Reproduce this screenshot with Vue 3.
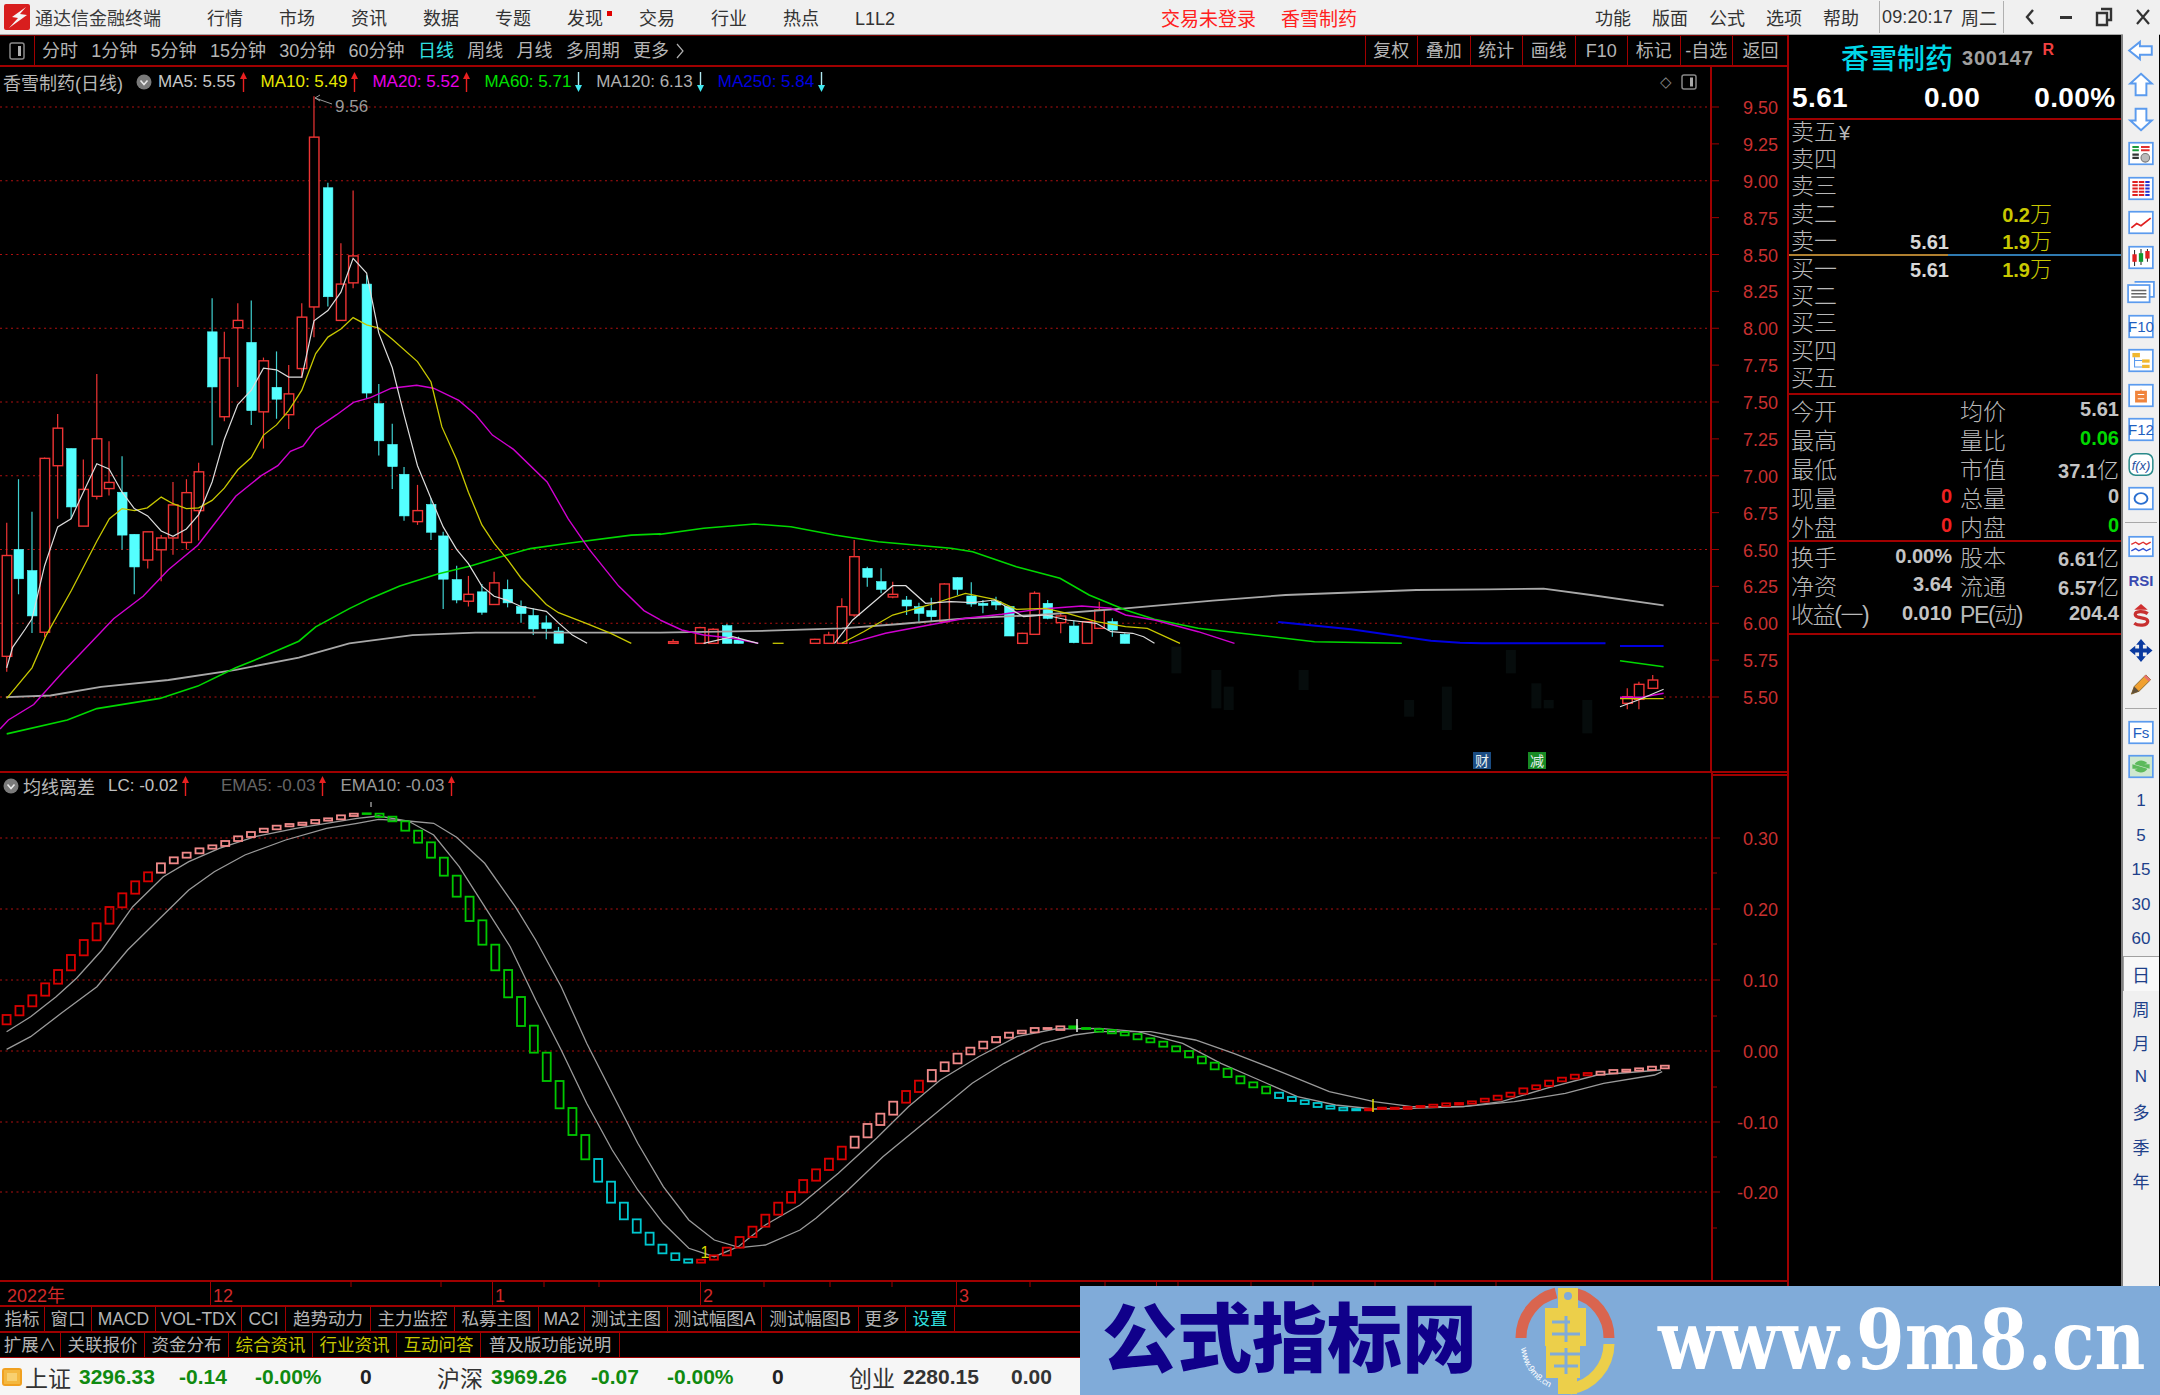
<template>
  <div class="terminal">
    <!-- 标题栏 -->
    <div class="titlebar">
      <svg class="app-logo" viewBox="0 0 26 26">
        <rect width="26" height="26" rx="2" fill="#d81e1e" />
        <path d="M22 3 L8 13 L14 14 L5 24 L23 11 L16 10 L22 3Z" fill="#f4f4f4" />
      </svg>
      <span class="app-name">通达信金融终端</span>
      <div class="menu">
        <span v-for="m in menuLeft" :key="m" class="menu-item" :class="{ dotted: m === '发现' }">{{ m }}</span>
      </div>
      <span class="notice notice-a">交易未登录</span>
      <span class="notice notice-b">香雪制药</span>
      <div class="menu menu-right">
        <span v-for="m in menuRight" :key="m">{{ m }}</span>
      </div>
      <div class="clock"><span>09:20:17</span><span>周二</span></div>
      <div class="win-btns">
        <svg viewBox="0 0 14 20" width="14" height="20"><path d="M10 3 L4 10 L10 17" fill="none" stroke="#333" stroke-width="2.4" /></svg>
        <svg viewBox="0 0 14 20" width="14" height="20"><rect x="1" y="9" width="12" height="3" fill="#333" /></svg>
        <svg viewBox="0 0 18 20" width="18" height="20"><path d="M6 2 H16 V13 H13 M2 6 H12 V18 H2Z" fill="none" stroke="#333" stroke-width="2.4" /></svg>
        <svg viewBox="0 0 16 20" width="16" height="20"><path d="M2 3 L14 17 M14 3 L2 17" stroke="#333" stroke-width="2.2" /></svg>
      </div>
    </div>

    <div class="main">
      <div class="left">
        <!-- 周期工具栏 -->
        <div class="toolbar">
          <div class="layout-btn">
            <svg viewBox="0 0 16 18" width="16" height="18"><rect x="1" y="1" width="14" height="16" rx="2" fill="none" stroke="#8a8a8a" stroke-width="1.5" /><rect x="9" y="4" width="3" height="10" fill="#b0b0b0" /></svg>
          </div>
          <div class="periods">
            <span v-for="p in periods" :key="p" :class="{ on: p === '日线' }">{{ p }}</span>
            <svg viewBox="0 0 10 18" width="10" height="18"><path d="M2 2 L8 9 L2 16" fill="none" stroke="#b0b0b0" stroke-width="1.2" /></svg>
          </div>
          <div class="tool-btns">
            <span v-for="t in toolBtns" :key="t">{{ t }}</span>
          </div>
        </div>

        <!-- K线主图 -->
        <div class="pane price-pane">
          <svg class="chart" viewBox="0 67 1788 705" width="1788" height="705">
            <template v-for="y in priceGrid" :key="y">
              <line v-if="y !== 697" class="grid" x1="0" :y1="y" x2="1710" :y2="y" />
            </template>
            <line class="grid" x1="0" y1="697" x2="536" y2="697" />
            <line class="grid" x1="1664" y1="697" x2="1710" y2="697" />

            <rect v-for="g in ghosts" :key="g[0]" :x="g[0] - 5" :y="g[1]" width="10" :height="g[2] - g[1]" fill="#060c0c" />

            <g v-for="(c, i) in candles" :key="i">
              <line :x1="c.x" :y1="c.wickTop" :x2="c.x" :y2="c.wickBottom" :stroke="c.up ? '#ee3434' : '#3fd0d0'" stroke-width="1.2" />
              <rect :x="c.x - 4.5" :y="c.top" width="9.5" :height="c.bottom - c.top" :class="c.up ? 'candle-up' : 'candle-down'" />
            </g>

            <template v-for="s in maSegments" :key="s.key">
              <polyline :points="s.points" fill="none" :stroke="s.color" :stroke-width="s.width" />
            </template>

            <path d="M315 98 L332 104 M315 98 L320 95 M315 98 L320 101" stroke="#999" fill="none" />
            <text x="335" y="112" class="peak">9.56</text>

            <rect x="1473" y="752" width="18" height="17" fill="#1a4c82" />
            <text x="1482" y="766" class="flag">财</text>
            <rect x="1528" y="752" width="18" height="17" fill="#178a24" />
            <text x="1537" y="766" class="flag">减</text>

            <line class="axis" x1="1711" y1="67" x2="1711" y2="772" />
            <line class="axis" x1="0" y1="772" x2="1788" y2="772" />
            <template v-for="l in priceLabels" :key="l.text">
              <line class="axis-thin" x1="1711" :y1="l.y" x2="1719" :y2="l.y" />
              <text x="1778" :y="l.y + 7" class="axis-text">{{ l.text }}</text>
            </template>
          </svg>

          <div class="legend">
            <span class="legend-name">香雪制药(日线)</span>
            <svg class="legend-dot" viewBox="0 0 16 16" width="16" height="16">
              <circle cx="8" cy="8" r="7.5" fill="#7a7a7a" />
              <path d="M4.5 6.5 L8 10.5 L11.5 6.5" fill="none" stroke="#e8e8e8" stroke-width="1.6" />
            </svg>
            <template v-for="m in maLegend" :key="m.label">
              <span class="legend-item" :style="{ color: m.color }">{{ m.label }}</span>
              <svg class="legend-arrow" :class="m.up ? 'arrow-up' : 'arrow-down'" viewBox="0 0 9 20" width="9" height="20">
                <template v-if="m.up"><path d="M4.5 6 V20" /><path d="M4.5 0 L8 7 H1Z" class="head" /></template>
                <template v-else><path d="M4.5 0 V14" /><path d="M4.5 20 L8 13 H1Z" class="head" /></template>
              </svg>
            </template>
          </div>
          <div class="pane-icons">
            <span>◇</span>
            <svg viewBox="0 0 16 16" width="16" height="16"><rect x="1" y="1" width="14" height="14" rx="2" fill="none" stroke="#888" stroke-width="1.5" /><rect x="9" y="3.5" width="3" height="9" fill="#aaa" /></svg>
          </div>
        </div>

        <!-- 副图：均线离差 -->
        <div class="pane indicator-pane">
          <svg class="chart" viewBox="0 772 1788 510" width="1788" height="510">
            <line v-for="y in indGrid" :key="y" class="grid" x1="0" :y1="y" x2="1710" :y2="y" />

            <polyline :points="ema5" fill="none" stroke="#9a9a9a" stroke-width="1.3" />
            <polyline :points="ema10" fill="none" stroke="#9a9a9a" stroke-width="1.3" />

            <rect
              v-for="(b, i) in lcBars"
              :key="i"
              :x="b.x - 4"
              :y="b.top"
              width="8"
              :height="b.height"
              fill="none"
              :stroke="b.color"
              stroke-width="1.8"
            />

            <line x1="371" y1="802" x2="371" y2="807" stroke="#ddd" />
            <text x="705" y="1258" class="sig" fill="#d8d800">1</text>
            <line x1="1077" y1="1019" x2="1077" y2="1032" stroke="#eee" stroke-width="1.5" />
            <line x1="1373" y1="1099" x2="1373" y2="1112" stroke="#e0e000" stroke-width="1.5" />

            <line class="axis" x1="0" y1="772" x2="1788" y2="772" />
            <line class="axis" x1="1712" y1="772" x2="1712" y2="1281" />
            <line class="axis" x1="1712" y1="775" x2="1788" y2="775" />
            <line class="axis" x1="0" y1="1281" x2="1788" y2="1281" />
            <template v-for="l in indLabels" :key="l.text">
              <line class="axis-thin" x1="1712" :y1="l.y" x2="1720" :y2="l.y" />
              <text x="1778" :y="l.y + 7" class="axis-text">{{ l.text }}</text>
            </template>
            <line v-for="y in indMinorTicks" :key="y" class="axis-thin" x1="1712" :y1="y" x2="1717" :y2="y" />
          </svg>

          <div class="legend legend-ind">
            <svg class="legend-dot" viewBox="0 0 16 16" width="16" height="16">
              <circle cx="8" cy="8" r="7.5" fill="#7a7a7a" />
              <path d="M4.5 6.5 L8 10.5 L11.5 6.5" fill="none" stroke="#e8e8e8" stroke-width="1.6" />
            </svg>
            <span class="legend-name">均线离差</span>
            <template v-for="m in indLegend" :key="m.label">
              <span class="legend-item" :class="m.cls">{{ m.label }}</span>
              <svg class="legend-arrow arrow-up" viewBox="0 0 9 20" width="9" height="20"><path d="M4.5 6 V20" /><path d="M4.5 0 L8 7 H1Z" class="head" /></svg>
            </template>
          </div>
        </div>

        <!-- 时间轴 -->
        <div class="date-axis">
          <span v-for="d in dates" :key="d.text" class="date-mark" :style="{ width: d.width + 'px' }">{{ d.text }}</span>
          <svg class="date-ticks" viewBox="0 1282 1788 6" width="1788" height="6">
            <line v-for="x in dateTicks" :key="x" :x1="x" y1="1282" :x2="x" y2="1287" stroke="#a00000" />
          </svg>
        </div>

        <!-- 底部标签 -->
        <div class="tabs tabs-a">
          <span v-for="t in tabsA" :key="t.text" :style="{ width: t.width + 'px' }" :class="t.cls">{{ t.text }}</span>
        </div>
        <div class="tabs tabs-b">
          <span v-for="t in tabsB" :key="t.text" :style="{ width: t.width + 'px' }" :class="t.cls">{{ t.text }}</span>
        </div>
      </div>

      <!-- 右侧盘口 -->
      <div class="quote">
        <div class="q-title">
          <span class="q-name">香雪制药</span>
          <span class="q-code">300147</span>
          <span class="q-flag">R</span>
        </div>
        <div class="q-price"><span>5.61</span><span>0.00</span><span>0.00%</span></div>

        <div class="book book-sell">
          <div v-for="r in sellRows" :key="r.name" class="book-row">
            <span class="book-name">{{ r.name }}<i v-if="r.name === '卖五'" class="yen">¥</i></span>
            <span class="book-price">{{ r.price }}</span>
            <span class="book-vol">{{ r.vol }}<i v-if="r.vol">万</i></span>
          </div>
        </div>
        <div class="book-split"><i></i><i></i></div>
        <div class="book book-buy">
          <div v-for="r in buyRows" :key="r.name" class="book-row">
            <span class="book-name">{{ r.name }}</span>
            <span class="book-price">{{ r.price }}</span>
            <span class="book-vol">{{ r.vol }}<i v-if="r.vol">万</i></span>
          </div>
        </div>

        <div class="stats">
          <div v-for="r in statsA" :key="r[0]" class="stat-row">
            <div class="stat-cell"><span>{{ r[0] }}</span><b :class="r[2]">{{ r[1] }}</b></div>
            <div class="stat-cell"><span>{{ r[3] }}</span><b :class="r[5]">{{ r[4] }}<i v-if="r[3] === '市值'">亿</i></b></div>
          </div>
        </div>
        <div class="stats stats-b">
          <div v-for="r in statsB" :key="r[0]" class="stat-row">
            <div class="stat-cell"><span :class="{ tight: r[0].length > 2 }">{{ r[0] }}</span><b>{{ r[1] }}</b></div>
            <div class="stat-cell"><span :class="{ tight: r[2].length > 2 }">{{ r[2] }}</span><b>{{ r[3] }}<i v-if="r[2] !== 'PE(动)'">亿</i></b></div>
          </div>
        </div>
      </div>

      <!-- 右侧竖排工具 -->
      <div class="side">
        <div class="side-item">
          <svg viewBox="0 0 26 22"><path class="arrow-ico" d="M2 11 L12 3 V7 H23 V15 H12 V19Z" /></svg>
        </div>
        <div class="side-item">
          <svg viewBox="0 0 26 22"><path class="arrow-ico" d="M13 1 L23 10 H18 V21 H8 V10 H3Z" /></svg>
        </div>
        <div class="side-item">
          <svg viewBox="0 0 26 22"><path class="arrow-ico" d="M13 21 L23 12 H18 V1 H8 V12 H3Z" /></svg>
        </div>
        <div class="side-item">
          <svg viewBox="0 0 26 22">
            <rect class="frame" x="2" y="1" width="22" height="20" />
            <path d="M5 5 H11 M5 8 H11" stroke="#1a9a3a" stroke-width="2" />
            <path d="M13 5 H21 M13 8 H21" stroke="#e03030" stroke-width="2" />
            <path d="M5 12 H11 M5 15 H11" stroke="#333" stroke-width="2" />
            <circle cx="17" cy="15" r="4" fill="#bbb" stroke="#777" />
          </svg>
        </div>
        <div class="side-item">
          <svg viewBox="0 0 26 22">
            <rect class="frame" x="2" y="1" width="22" height="20" />
            <path d="M5 5 H10 M5 8 H10 M5 11 H10 M5 14 H10 M5 17 H10" stroke="#e02020" stroke-width="2" />
            <path d="M11 5 H16 M11 8 H16 M11 11 H16 M11 14 H16 M11 17 H16" stroke="#e02020" stroke-width="2" />
            <path d="M17 5 H21 M17 8 H21 M17 11 H21 M17 14 H21 M17 17 H21" stroke="#2030d0" stroke-width="2" />
          </svg>
        </div>
        <div class="side-item">
          <svg viewBox="0 0 26 22">
            <rect class="frame" x="2" y="1" width="22" height="20" />
            <path d="M4 16 L9 12 L13 14 L22 7" fill="none" stroke="#e02020" stroke-width="1.6" />
          </svg>
        </div>
        <div class="side-item">
          <svg viewBox="0 0 26 22">
            <rect class="frame" x="2" y="1" width="22" height="20" />
            <path d="M7 4 V19 M13 3 V18 M19 3 V15" stroke="#333" />
            <rect x="5" y="8" width="4" height="7" fill="#e02020" />
            <rect x="11" y="7" width="4" height="8" fill="#109a30" />
            <rect x="17" y="5" width="4" height="7" fill="#e02020" />
          </svg>
        </div>
        <div class="side-item">
          <svg viewBox="0 0 26 22">
            <path class="frame" d="M7 2 H25 V16 H21" />
            <rect class="frame" x="1" y="5" width="20" height="16" />
            <path d="M4 10 H18 M4 13 H18 M4 16 H18" stroke="#666" stroke-width="1.4" />
          </svg>
        </div>
        <div class="side-item">
          <svg viewBox="0 0 26 22">
            <rect class="frame" x="2" y="1" width="22" height="20" />
            <text x="13" y="16.5" class="ico-text">F10</text>
          </svg>
        </div>
        <div class="side-item">
          <svg viewBox="0 0 26 22">
            <rect class="frame" x="2" y="1" width="22" height="20" />
            <rect x="5" y="4" width="7" height="4" fill="#f0b830" />
            <rect x="14" y="10" width="7" height="3" fill="#f0b830" />
            <rect x="14" y="15" width="7" height="3" fill="#f0b830" />
            <path d="M7 8 V17 H14 M7 11 H14" fill="none" stroke="#5b9bee" />
          </svg>
        </div>
        <div class="side-item">
          <svg viewBox="0 0 26 22">
            <rect class="frame" x="2" y="1" width="22" height="20" />
            <path d="M13 3 L14 6 H19 V18 H7 V6 H12Z M10 10 H16 M10 14 H16" fill="#f0843c" stroke="#fff" stroke-width="1" />
          </svg>
        </div>
        <div class="side-item">
          <svg viewBox="0 0 26 22">
            <rect class="frame" x="2" y="1" width="22" height="20" />
            <text x="13" y="16.5" class="ico-text">F12</text>
          </svg>
        </div>
        <div class="side-item">
          <svg viewBox="0 0 26 22">
            <rect x="2" y="1" width="22" height="20" rx="6" fill="#fff" stroke="#2a8a8a" stroke-width="1.4" />
            <text x="13" y="16" class="ico-fx">f(x)</text>
          </svg>
        </div>
        <div class="side-item">
          <svg viewBox="0 0 26 22">
            <rect class="frame" x="2" y="1" width="22" height="20" />
            <ellipse cx="13" cy="11" rx="6" ry="5" fill="none" stroke="#2a6fd0" stroke-width="1.8" />
          </svg>
        </div>
        <div class="side-sep"></div>
        <div class="side-item">
          <svg viewBox="0 0 26 22">
            <rect class="frame" x="2" y="2" width="22" height="18" />
            <path d="M4 9 L8 7 L11 9 L15 7 L18 9 L22 7" fill="none" stroke="#e03030" stroke-width="1.3" />
            <path d="M4 15 L8 13 L11 15 L15 13 L18 15 L22 13" fill="none" stroke="#3050d0" stroke-width="1.3" />
          </svg>
        </div>
        <div class="side-item"><span class="ico-rsi">RSI</span></div>
        <div class="side-item">
          <svg viewBox="0 0 26 26">
            <path d="M13 1 L20 7 H6Z" fill="#d03030" />
            <path d="M20 11 C16 8 7 8 7 12 C7 17 20 14 20 19 C20 24 10 24 6 21" fill="none" stroke="#c83030" stroke-width="3.4" />
          </svg>
        </div>
        <div class="side-item">
          <svg viewBox="0 0 26 26">
            <path d="M13 1 L18 7 H15 V11 H19 V8 L25 13 L19 18 V15 H15 V19 H18 L13 25 L8 19 H11 V15 H7 V18 L1 13 L7 8 V11 H11 V7 H8Z" fill="#0a3aa0" />
          </svg>
        </div>
        <div class="side-item">
          <svg viewBox="0 0 26 26">
            <path d="M3 23 L6 15 L18 3 L23 8 L11 20Z" fill="#f0a030" stroke="#8a6a30" />
            <path d="M18 3 L23 8 L21 10 L16 5Z" fill="#e87070" />
            <path d="M3 23 L6 15 L11 20Z" fill="#60503a" />
          </svg>
        </div>
        <div class="side-sep"></div>
        <div class="side-item">
          <svg viewBox="0 0 26 22">
            <rect class="frame" x="2" y="1" width="22" height="20" />
            <text x="13" y="16.5" class="ico-text">Fs</text>
          </svg>
        </div>
        <div class="side-item">
          <svg viewBox="0 0 26 22">
            <rect class="frame frame-green" x="2" y="1" width="22" height="20" />
            <path d="M7 9 C9 5 15 4 19 8 L16 9 H21 V13 M19 13 C17 17 11 18 7 14 L10 13 H5 V9" fill="#5cba5c" />
          </svg>
        </div>
        <div
          v-for="n in sideLabels"
          :key="n"
          class="side-item side-label"
          :class="{ active: n === '日' }"
        >{{ n }}</div>
      </div>
    </div>

    <!-- 状态栏 -->
    <div class="statusbar">
      <div class="status-ico"><i></i></div>
      <div v-for="g in indices" :key="g.name" class="index" :class="g.cls">
        <span class="idx-name">{{ g.name }}</span>
        <span class="idx-val">{{ g.value }}</span>
        <span class="idx-chg">{{ g.chg }}</span>
        <span class="idx-pct">{{ g.pct }}</span>
        <span class="idx-vol">{{ g.vol }}</span>
      </div>
    </div>

    <!-- 水印横幅 -->
    <div class="banner">
      <span class="banner-cn">公式指标网</span>
      <svg class="banner-logo" viewBox="432 0 106 109" width="106" height="109">
        <path d="M441 52 A46 46 0 0 1 476 7" fill="none" stroke="#d9654f" stroke-width="11" />
        <path d="M494 7 A46 46 0 0 1 529 52" fill="none" stroke="#d9654f" stroke-width="11" />
        <path d="M529 58 A46 46 0 0 1 490 103" fill="none" stroke="#eccf4a" stroke-width="11" />
        <path d="M478 2 H498 V22 H506 V60 H500 V92 H497 V108 H478 V92 H466 V60 H465 V22 H478Z" fill="#eccf4a" />
        <circle cx="488" cy="10" r="4" fill="#80abd9" />
        <path d="M472 36 H490 M472 48 H500 M470 68 H502 M474 80 H498 M486 30 V56 M486 62 V88" stroke="#80abd9" stroke-width="3" />
        <path id="logo-arc" d="M441 62 A47 47 0 0 0 478 104" fill="none" />
        <text class="logo-url"><textPath href="#logo-arc">www.9m8.cn</textPath></text>
      </svg>
      <span class="banner-url">www.9m8.cn</span>
    </div>
  </div>
</template>

<script setup>
// 读屏数据的坐标换算
const cropA = ([x, y]) => [x / 2.376, 80 + y / 2.45]
const cropB = ([x, y]) => [660 + x / 1.375, 500 + y / 3]
const cropC = ([x, y]) => [x / 1.96, 760 + y / 3]
const cropD = ([x, y]) => [800 + x / 1.568, 960 + y / 3]
const toPoints = pts => pts.map(p => `${p[0].toFixed(1)},${p[1].toFixed(1)}`).join(' ')

const menuLeft = ['行情', '市场', '资讯', '数据', '专题', '发现', '交易', '行业', '热点', 'L1L2']
const menuRight = ['功能', '版面', '公式', '选项', '帮助']
const periods = ['分时', '1分钟', '5分钟', '15分钟', '30分钟', '60分钟', '日线', '周线', '月线', '多周期', '更多']
const toolBtns = ['复权', '叠加', '统计', '画线', 'F10', '标记', '-自选', '返回']

// K线
const candlesLeft = [
  [16, 1085, 1165, 1412, 1450, 1], [44, 978, 1150, 1222, 1260, 0], [76, 1058, 1202, 1313, 1355, 0],
  [106, 925, 927, 1353, 1365, 1], [137, 818, 853, 945, 1075, 1], [169, 903, 903, 1046, 1075, 0],
  [198, 930, 1003, 1093, 1093, 1], [230, 720, 879, 1020, 1028, 1], [259, 885, 986, 1001, 1018, 1],
  [290, 922, 1010, 1115, 1150, 0], [319, 1113, 1113, 1193, 1260, 0], [351, 1107, 1107, 1176, 1197, 1],
  [383, 1115, 1122, 1151, 1228, 1], [411, 985, 1041, 1122, 1163, 1], [443, 978, 1011, 1133, 1150, 1],
  [472, 938, 960, 1055, 1128, 1], [504, 535, 617, 752, 895, 0], [533, 617, 681, 825, 836, 1],
  [565, 547, 589, 607, 752, 1], [597, 540, 643, 810, 845, 0], [626, 680, 688, 813, 903, 1],
  [657, 665, 753, 782, 830, 0], [686, 698, 769, 820, 855, 1], [717, 547, 581, 707, 730, 1],
  [746, 40, 140, 556, 630, 1], [779, 252, 264, 531, 555, 0], [810, 400, 500, 589, 589, 1],
  [839, 271, 431, 497, 510, 1], [871, 478, 500, 767, 780, 0], [900, 745, 793, 884, 920, 0],
  [932, 842, 893, 947, 1002, 0], [960, 948, 966, 1068, 1080, 0], [992, 992, 1055, 1082, 1090, 1],
  [1024, 1025, 1040, 1108, 1127, 0], [1053, 1107, 1117, 1223, 1296, 0], [1085, 1190, 1224, 1274, 1282, 0],
  [1113, 1215, 1260, 1277, 1290, 1], [1145, 1235, 1254, 1304, 1310, 0], [1174, 1205, 1232, 1285, 1285, 1],
  [1206, 1224, 1248, 1281, 1292, 0], [1238, 1275, 1290, 1307, 1330, 0], [1267, 1295, 1312, 1345, 1360, 0],
  [1298, 1312, 1330, 1344, 1370, 0], [1327, 1340, 1350, 1380, 1380, 0]
]
const candlesRight = [
  [18, 418, 425, 430, 430, 1], [55, 380, 383, 430, 430, 1], [73, 385, 388, 430, 430, 1],
  [92, 372, 377, 430, 430, 0], [108, 410, 420, 430, 430, 0], [213, 416, 418, 430, 430, 1],
  [232, 395, 405, 430, 430, 1], [250, 295, 320, 430, 430, 1], [267, 120, 170, 345, 350, 1],
  [285, 200, 205, 232, 260, 0], [304, 205, 245, 268, 280, 0], [320, 245, 283, 291, 295, 1],
  [339, 288, 300, 318, 345, 0], [356, 308, 320, 340, 365, 0], [373, 293, 332, 350, 365, 0],
  [391, 250, 252, 365, 365, 1], [409, 232, 233, 268, 285, 0], [428, 247, 288, 312, 320, 0],
  [444, 300, 310, 316, 340, 0], [462, 290, 305, 315, 330, 0], [480, 318, 320, 408, 408, 0],
  [498, 398, 400, 430, 430, 1], [515, 274, 280, 403, 403, 1], [533, 300, 310, 355, 358, 0],
  [551, 335, 348, 368, 400, 1], [569, 362, 378, 428, 430, 0], [587, 363, 365, 430, 430, 1],
  [604, 305, 330, 385, 385, 1], [622, 355, 365, 390, 410, 0], [639, 400, 403, 430, 430, 0],
  [1330, 565, 590, 610, 628, 1], [1346, 545, 553, 598, 628, 1], [1365, 525, 540, 565, 565, 1]
]
const makeCandle = map => ([x, wt, t, b, wb, up]) => ({
  x: map([x, 0])[0],
  wickTop: map([0, wt])[1],
  top: map([0, t])[1],
  bottom: map([0, b])[1],
  wickBottom: map([0, wb])[1],
  up: !!up
})
const candles = [...candlesLeft.map(makeCandle(cropA)), ...candlesRight.map(makeCandle(cropB))]

// 被遮挡区域里隐约可见的K线
const ghosts = [[710, 440, 520], [765, 510, 625], [782, 560, 630], [885, 510, 570], [1030, 600, 650], [1082, 560, 690], [1170, 450, 520], [1205, 550, 625], [1222, 600, 625], [1275, 600, 700]]
  .map(([x, a, b]) => [660 + x / 1.375, 500 + a / 3, 500 + b / 3])

// 均线
const ma5 = [
  [[16, 1440], [30, 1390], [60, 1345], [76, 1320], [106, 1190], [137, 1095], [169, 1075], [198, 1010], [230, 940], [259, 953], [290, 1010], [319, 1050], [351, 1068], [383, 1105], [411, 1118], [443, 1100], [472, 1065], [504, 985], [533, 880], [565, 795], [597, 760], [626, 706], [657, 710], [686, 728], [717, 728], [746, 590], [779, 565], [810, 520], [839, 437], [871, 473], [900, 620], [932, 705], [960, 820], [992, 945], [1024, 1025], [1053, 1095], [1085, 1150], [1113, 1185], [1145, 1240], [1174, 1265], [1206, 1275], [1238, 1290], [1298, 1302], [1327, 1330], [1360, 1360], [1395, 1380]],
  [[60, 430], [100, 410], [135, 430]],
  [[240, 430], [265, 360], [300, 295], [320, 257], [338, 257], [365, 310], [400, 305], [430, 308], [460, 300], [480, 325], [500, 350], [530, 345], [560, 360], [600, 370], [620, 395], [650, 400], [665, 410], [680, 430]],
  [[1320, 620], [1345, 600], [1380, 568]]
]
const ma10 = [
  [[16, 1515], [76, 1440], [110, 1360], [170, 1250], [230, 1130], [260, 1075], [290, 1050], [320, 1055], [350, 1048], [383, 1022], [411, 1038], [443, 1050], [472, 1048], [504, 1030], [533, 1000], [565, 955], [597, 925], [626, 870], [657, 845], [686, 810], [717, 760], [750, 670], [779, 630], [810, 610], [839, 582], [871, 600], [900, 608], [932, 635], [992, 690], [1024, 740], [1050, 850], [1085, 930], [1113, 1010], [1145, 1090], [1174, 1135], [1206, 1175], [1238, 1220], [1298, 1285], [1327, 1305], [1390, 1330], [1450, 1355], [1500, 1380]],
  [[155, 430], [170, 430]],
  [[250, 430], [280, 395], [320, 345], [370, 315], [420, 280], [460, 298], [490, 328], [530, 325], [560, 340], [600, 365], [640, 380], [670, 385], [715, 430]],
  [[1320, 596], [1380, 596]]
]
const ma20 = [
  [[0, 1590], [20, 1568], [80, 1530], [150, 1450], [210, 1385], [270, 1320], [340, 1265], [400, 1200], [470, 1140], [500, 1100], [560, 1020], [620, 970], [660, 945], [690, 910], [720, 897], [750, 855], [800, 820], [840, 790], [880, 778], [930, 755], [990, 748], [1030, 755], [1090, 785], [1130, 820], [1170, 870], [1220, 905], [1300, 985], [1350, 1075], [1400, 1150], [1470, 1240], [1530, 1300], [1568, 1322]],
  [[0, 360], [30, 390], [60, 405], [100, 415], [135, 430]],
  [[260, 430], [310, 400], [370, 375], [420, 355], [470, 343], [520, 328], [580, 318], [620, 325], [640, 345], [680, 360], [740, 395], [790, 430]],
  [[1320, 592], [1350, 592], [1380, 580]]
]
const ma60Left = [[16, 1602], [160, 1568], [230, 1540], [380, 1515], [470, 1485], [560, 1440], [620, 1415], [710, 1375], [750, 1340], [830, 1295], [880, 1270], [950, 1240], [1040, 1210], [1120, 1190], [1200, 1165], [1260, 1148], [1350, 1135], [1500, 1115], [1568, 1112]]
const ma60Right = [[0, 103], [60, 85], [130, 72], [180, 80], [240, 105], [300, 125], [400, 145], [430, 155], [490, 200], [550, 235], [590, 285], [640, 330], [680, 358], [740, 385], [820, 405], [900, 425], [1020, 430]]
const ma120Left = [[15, 1512], [120, 1508], [240, 1487], [400, 1470], [560, 1445], [710, 1415], [830, 1380], [980, 1360], [1130, 1354], [1568, 1354]]
const ma120Right = [[0, 398], [150, 392], [250, 385], [330, 372], [420, 355], [520, 345], [640, 325], [760, 302], [860, 285], [1040, 270], [1140, 268], [1215, 266], [1280, 285], [1380, 316]]

const twoCrops = ([left, ...rest]) => [left.map(cropA), ...rest.map(s => s.map(cropB))]
const maSeries = [
  { color: '#a8a8a8', width: 1.8, segs: [[...ma120Left.map(cropA), ...ma120Right.map(cropB)]] },
  { color: '#00d800', width: 1.6, segs: [[...ma60Left.map(cropA), ...ma60Right.map(cropB)], [[1320, 482], [1380, 500]].map(cropB)] },
  { color: '#d000d0', width: 1.4, segs: twoCrops(ma20) },
  { color: '#c8c800', width: 1.3, segs: twoCrops(ma10) },
  { color: '#dcdcdc', width: 1.2, segs: twoCrops(ma5) },
  { color: '#0000e0', width: 2, segs: [[[850, 366], [950, 388], [1060, 422], [1100, 428], [1130, 430], [1300, 430]].map(cropB), [[1320, 438], [1380, 438]].map(cropB)] }
]
const maSegments = maSeries.flatMap((s, i) => s.segs.map((seg, j) => ({
  key: `${i}-${j}`,
  color: s.color,
  width: s.width,
  points: toPoints(seg)
})))

const maLegend = [
  { label: 'MA5: 5.55', color: '#c8c8c8', up: true },
  { label: 'MA10: 5.49', color: '#e8e800', up: true },
  { label: 'MA20: 5.52', color: '#e800e8', up: true },
  { label: 'MA60: 5.71', color: '#00e000', up: false },
  { label: 'MA120: 6.13', color: '#b0b0b0', up: false },
  { label: 'MA250: 5.84', color: '#0000e0', up: false }
]
const indLegend = [
  { label: 'LC: -0.02', cls: 'ind-lc' },
  { label: 'EMA5: -0.03', cls: 'ind-ema5' },
  { label: 'EMA10: -0.03', cls: 'ind-ema10' }
]

const priceGrid = Array.from({ length: 9 }, (_, i) => 107 + i * 73.75)
const priceLabels = Array.from({ length: 17 }, (_, i) => ({
  text: (9.5 - i * 0.25).toFixed(2),
  y: 107 + i * 36.875
}))

// 副图 LC 方块
const lcLeft = [
  [765, 793], [738, 766], [706, 739], [670, 707], [630, 671], [585, 631], [540, 586], [490, 541], [441, 491], [400, 442], [364, 401], [337, 364],
  [310, 338], [292, 310], [278, 293], [265, 280], [256, 266], [243, 258], [229, 243], [216, 231], [206, 216], [197, 208], [192, 199], [188, 195], [180, 190], [175, 182], [166, 178], [161, 168],
  [160, 162], [161, 171], [170, 184], [184, 212], [212, 248], [247, 293], [293, 347], [347, 410], [410, 483], [481, 554], [554, 631], [630, 712], [711, 798], [797, 878], [878, 963], [963, 1045], [1044, 1125], [1125, 1198],
  [1197, 1265], [1265, 1328], [1328, 1378], [1378, 1418], [1418, 1454], [1454, 1480], [1480, 1500], [1498, 1508],
  [1499, 1508], [1486, 1499], [1463, 1486], [1431, 1463], [1400, 1431], [1364, 1400], [1328, 1364], [1296, 1328]
]
const lcRight = [
  [660, 697], [628, 662], [596, 630], [560, 598], [530, 563], [492, 532], [461, 495], [425, 464], [393, 428], [362, 396],
  [330, 364], [307, 333], [281, 310], [263, 283], [245, 265], [231, 247], [218, 233], [212, 220], [204, 217], [204, 207], [199, 210],
  [199, 204], [204, 207], [207, 215], [210, 220], [216, 226], [222, 238], [235, 247], [245, 260], [259, 274], [273, 292], [290, 310], [308, 328], [326, 351], [349, 370], [367, 382], [380, 400],
  [398, 414], [411, 423], [421, 432], [429, 441], [438, 446], [443, 451], [447, 451],
  [446, 451], [443, 447], [443, 447], [441, 447], [438, 442], [434, 441], [430, 438], [429, 434], [424, 431], [416, 425], [407, 419], [398, 410], [385, 401], [376, 387], [362, 378], [353, 364], [344, 356], [339, 346],
  [335, 344], [330, 340], [329, 335], [325, 332], [320, 330], [317, 325]
]
const RED = '#d80000'
const PINK = '#f08a8a'
const GREEN = '#00c800'
const CYAN = '#00c8d0'
const colorLeft = i => (i < 12 ? RED : i < 28 ? PINK : i < 46 ? GREEN : i < 54 ? CYAN : RED)
const colorRight = i => {
  if (i < 4 || i === 8 || i === 9) return RED
  if (i < 21) return PINK
  if (i < 37) return GREEN
  if (i < 44) return CYAN
  if (i < 62) return RED
  return PINK
}
const lcBars = [
  ...lcLeft.map(([t, b], i) => ({ x: 6.6 + i * 12.86, top: 760 + t / 3, height: (b - t) / 3, color: colorLeft(i) })),
  ...lcRight.map(([t, b], i) => ({ x: 803.2 + i * 12.86, top: 960 + t / 3, height: (b - t) / 3, color: colorRight(i) }))
]

const ema5 = toPoints([
  ...[[13, 815], [60, 770], [110, 710], [150, 655], [200, 570], [260, 440], [320, 350], [370, 305], [430, 265], [500, 230], [580, 205], [640, 190], [700, 175], [742, 168], [800, 183], [850, 225], [900, 320], [950, 440], [1000, 560], [1050, 720], [1100, 870], [1150, 1030], [1200, 1170], [1250, 1290], [1300, 1390], [1350, 1465], [1400, 1490], [1447, 1460], [1500, 1395], [1568, 1335]].map(cropC),
  ...[[0, 735], [60, 640], [120, 535], [170, 440], [220, 360], [280, 290], [340, 230], [400, 207], [470, 205], [530, 215], [600, 250], [660, 310], [720, 360], [780, 410], [840, 435], [900, 447], [960, 445], [1040, 440], [1100, 425], [1170, 385], [1250, 345], [1350, 330]].map(cropD)
])
const ema10 = toPoints([
  ...[[13, 868], [60, 830], [120, 760], [190, 680], [250, 570], [310, 480], [370, 390], [420, 335], [480, 285], [560, 240], [640, 205], [700, 190], [742, 178], [800, 183], [850, 190], [895, 232], [950, 310], [1010, 440], [1050, 540], [1100, 680], [1150, 850], [1200, 1000], [1250, 1150], [1300, 1280], [1350, 1380], [1400, 1440], [1450, 1463], [1500, 1455], [1568, 1410]].map(cropC),
  ...[[0, 810], [25, 775], [70, 700], [130, 590], [200, 480], [270, 370], [320, 310], [380, 250], [430, 225], [470, 215], [550, 215], [620, 240], [680, 280], [760, 340], [830, 395], [900, 425], [960, 440], [1040, 440], [1120, 425], [1200, 400], [1260, 370], [1340, 345], [1352, 335]].map(cropD)
])

const indGrid = [838, 909, 980, 1051, 1122, 1192]
const indLabels = [
  { text: '0.30', y: 838 }, { text: '0.20', y: 909 }, { text: '0.10', y: 980 },
  { text: '0.00', y: 1051 }, { text: '-0.10', y: 1122 }, { text: '-0.20', y: 1192 }
]
const indMinorTicks = [873, 944, 1016, 1087, 1157, 1228]

const dates = [
  { text: '2022年', width: 211 }, { text: '12', width: 282 }, { text: '1', width: 208 },
  { text: '2', width: 256 }, { text: '3', width: 200 }
]
const dateTicks = [351, 441, 544, 599, 764, 830, 892, 1030, 1105, 1178, 1251, 1313, 1375, 1435, 1496]

const tabsA = [
  { text: '指标', width: 45 }, { text: '窗口', width: 47 }, { text: 'MACD', width: 64 }, { text: 'VOL-TDX', width: 86 },
  { text: 'CCI', width: 44 }, { text: '趋势动力', width: 85 }, { text: '主力监控', width: 84 }, { text: '私募主图', width: 84 },
  { text: 'MA2', width: 46 }, { text: '测试主图', width: 83 }, { text: '测试幅图A', width: 94 }, { text: '测试幅图B', width: 97 },
  { text: '更多', width: 47 }, { text: '设置', width: 49, cls: 'cyan' }
]
const tabsB = [
  { text: '扩展∧', width: 61 }, { text: '关联报价', width: 84 }, { text: '资金分布', width: 84 },
  { text: '综合资讯', width: 84, cls: 'olive' }, { text: '行业资讯', width: 84, cls: 'olive' }, { text: '互动问答', width: 84, cls: 'olive' },
  { text: '普及版功能说明', width: 139 }
]

// 盘口
const sellRows = [
  { name: '卖五', price: '', vol: '' }, { name: '卖四', price: '', vol: '' }, { name: '卖三', price: '', vol: '' },
  { name: '卖二', price: '', vol: '0.2' }, { name: '卖一', price: '5.61', vol: '1.9' }
]
const buyRows = [
  { name: '买一', price: '5.61', vol: '1.9' }, { name: '买二', price: '', vol: '' }, { name: '买三', price: '', vol: '' },
  { name: '买四', price: '', vol: '' }, { name: '买五', price: '', vol: '' }
]
const statsA = [
  ['今开', '', '', '均价', '5.61', ''],
  ['最高', '', '', '量比', '0.06', 'green'],
  ['最低', '', '', '市值', '37.1', ''],
  ['现量', '0', 'red', '总量', '0', ''],
  ['外盘', '0', 'red', '内盘', '0', 'green']
]
const statsB = [
  ['换手', '0.00%', '股本', '6.61'],
  ['净资', '3.64', '流通', '6.57'],
  ['收益(一)', '0.010', 'PE(动)', '204.4']
]

const sideLabels = ['1', '5', '15', '30', '60', '日', '周', '月', 'N', '多', '季', '年']

const indices = [
  { name: '上证', value: '3296.33', chg: '-0.14', pct: '-0.00%', vol: '0' },
  { name: '沪深', value: '3969.26', chg: '-0.07', pct: '-0.00%', vol: '0' },
  { name: '创业', value: '2280.15', chg: '0.00', pct: '', vol: '', cls: 'flat' }
]
</script>

<style scoped>
.terminal {
  position: relative;
  width: 2160px;
  height: 1395px;
  overflow: hidden;
  display: flex;
  flex-direction: column;
  background: #000;
  font-family: 'Liberation Sans', 'Noto Sans CJK SC', sans-serif;
  font-size: 18px;
}

/* 标题栏 */
.titlebar {
  height: 35px;
  flex: none;
  display: flex;
  align-items: center;
  background: #f0f0f0;
  color: #333;
  box-sizing: border-box;
  border-bottom: 1px solid #a8a8a8;
}
.app-logo {
  width: 26px;
  height: 26px;
  margin-left: 4px;
}
.app-name {
  margin-left: 5px;
  width: 172px;
  color: #3a3a3a;
}
.menu {
  display: flex;
  align-items: baseline;
  gap: 36px;
}
.menu-item {
  position: relative;
}
.menu-item.dotted::after {
  content: '';
  position: absolute;
  right: -9px;
  top: 7px;
  width: 5px;
  height: 5px;
  background: #e00000;
}
.notice {
  color: #ff2020;
  font-size: 19px;
}
.notice-a {
  position: relative;
  margin-left: 266px;
}
.notice-b {
  margin-left: 25px;
}
.menu-right {
  gap: 21px;
  margin-left: 238px;
}
.clock {
  margin-left: 20px;
  width: 125px;
  box-sizing: border-box;
  padding-left: 2px;
  height: 32px;
  display: flex;
  align-items: center;
  gap: 8px;
  border-left: 1px solid #b0b0b0;
  border-right: 1px solid #b0b0b0;
  font-size: 18px;
}
.clock span:first-child {
  letter-spacing: 0.1px;
}
.win-btns {
  margin-left: 19px;
  display: flex;
  align-items: center;
  gap: 22px;
}

/* 主体 */
.main {
  height: 1323px;
  flex: none;
  display: flex;
}
.left {
  width: 1788px;
  flex: none;
  display: flex;
  flex-direction: column;
  box-sizing: border-box;
}

/* 工具栏 */
.toolbar {
  height: 32px;
  flex: none;
  box-sizing: border-box;
  display: flex;
  align-items: stretch;
  border-bottom: 2px solid #a00000;
  border-top: 1px solid #7a0000;
  color: #b4b4b4;
}
.layout-btn {
  width: 35px;
  display: flex;
  align-items: center;
  justify-content: center;
  box-sizing: border-box;
  border-right: 1px solid #a00000;
}
.periods {
  display: flex;
  align-items: baseline;
  line-height: 31px;
  gap: 13.3px;
  padding-left: 7px;
}
.periods svg {
  align-self: center;
  margin-left: -7px;
}
.periods .on {
  color: #30e0e0;
}
.tool-btns {
  margin-left: auto;
  display: flex;
}
.tool-btns span {
  width: 52.5px;
  box-sizing: border-box;
  border-left: 1px solid #a00000;
  line-height: 31px;
  text-align: center;
}
.tool-btns span:last-child {
  width: 56px;
}

/* 图区 */
.pane {
  position: relative;
  flex: none;
}
.price-pane {
  height: 705px;
}
.indicator-pane {
  height: 510px;
}
.chart {
  display: block;
}
.grid {
  stroke: #b01010;
  stroke-dasharray: 2 3.5;
  stroke-width: 1;
}
.axis {
  stroke: #a00000;
  stroke-width: 2;
}
.axis-thin {
  stroke: #a00000;
  stroke-width: 1;
}
.axis-text {
  fill: #c83030;
  font-size: 18px;
  text-anchor: end;
}
.candle-up {
  fill: #000;
  stroke: #ee3434;
  stroke-width: 1.4;
}
.candle-down {
  fill: #54ffff;
  stroke: #54ffff;
  stroke-width: 0.6;
}
.peak {
  fill: #999;
  font-size: 17px;
}
.flag {
  fill: #e8f0f0;
  font-size: 14px;
  text-anchor: middle;
}
.sig {
  font-size: 16px;
  text-anchor: middle;
}

/* 图例 */
.legend {
  position: absolute;
  left: 3px;
  top: 1px;
  height: 28px;
  display: flex;
  align-items: center;
  font-size: 17px;
  color: #b8b8b8;
}
.legend-name {
  font-size: 18px;
  margin-right: 13px;
  white-space: nowrap;
}
.legend-dot {
  flex: none;
  margin-right: 6px;
}
.legend-item {
  white-space: nowrap;
}
.legend-arrow {
  flex: none;
  margin: 0 13px 0 3px;
  stroke-width: 1.4;
  fill: none;
}
.legend-arrow .head {
  stroke: none;
}
.arrow-up {
  stroke: #e82020;
}
.arrow-up .head {
  fill: #e82020;
}
.arrow-down {
  stroke: #b0e8f0;
}
.arrow-down .head {
  fill: #40e8f0;
}
.legend-ind {
  left: 3px;
  top: 0;
}
.legend-ind .legend-dot {
  margin-right: 4px;
}
.ind-lc {
  color: #c0c0c0;
}
.ind-ema5 {
  margin-left: 18px;
  color: #666;
}
.ind-ema10 {
  color: #999;
}
.pane-icons {
  position: absolute;
  left: 1660px;
  top: 6px;
  display: flex;
  align-items: center;
  gap: 9px;
  color: #888;
  font-family: 'DejaVu Sans', sans-serif;
  font-size: 15px;
}

/* 时间轴 */
.date-axis {
  position: relative;
  height: 23px;
  flex: none;
  display: flex;
  color: #d02828;
}
.date-mark {
  box-sizing: border-box;
  padding-left: 2px;
  padding-top: 3px;
  border-right: 1px solid #a00000;
  line-height: 22px;
}
.date-mark:first-child {
  padding-left: 7px;
}
.date-ticks {
  position: absolute;
  left: 0;
  top: 0;
}

/* 底部标签 */
.tabs {
  flex: none;
  display: flex;
  box-sizing: border-box;
  border-top: 2px solid #a00000;
  color: #b4b4b4;
}
.tabs-a {
  height: 26px;
}
.tabs-b {
  height: 27px;
  border-bottom: 1px solid #a00000;
}
.tabs span {
  box-sizing: border-box;
  border-right: 1px solid #a00000;
  text-align: center;
  line-height: 25px;
  white-space: nowrap;
  overflow: hidden;
  font-size: 17.5px;
}
.tabs .cyan {
  color: #30e0e0;
}
.tabs .olive {
  color: #c4c400;
}

/* 盘口 */
.quote {
  width: 336px;
  flex: none;
  box-sizing: border-box;
  border-left: 2px solid #a00000;
  border-right: 2px solid #808080;
  margin-left: -1px;
  color: #b8b8b8;
  font-size: 23px;
  font-weight: 300;
  display: flex;
  flex-direction: column;
}
.q-title {
  height: 43px;
  flex: none;
  display: flex;
  align-items: center;
  padding-left: 52px;
}
.q-name {
  font-size: 28px;
  font-weight: 500;
  color: #00d8e8;
}
.q-code {
  margin-left: 9px;
  font-size: 20px;
  letter-spacing: 0.8px;
  font-weight: 700;
  color: #a0a0a0;
  margin-top: 4px;
}
.q-flag {
  margin-left: 9px;
  font-size: 16px;
  font-weight: 700;
  color: #f04040;
  margin-top: -14px;
}
.q-price {
  height: 42px;
  flex: none;
  box-sizing: border-box;
  display: flex;
  align-items: center;
  border-bottom: 2px solid #a00000;
  padding: 0 5px;
  font-weight: 700;
  font-size: 28px;
  letter-spacing: 0.4px;
  color: #fff;
}
.q-price span:nth-child(1) {
  margin-left: -2px;
}
.q-price span:nth-child(2) {
  margin-left: 76px;
}
.q-price span:nth-child(3) {
  margin-left: 54px;
}
.book-row {
  height: 27.2px;
  display: flex;
  align-items: baseline;
  line-height: 27px;
  padding-left: 2px;
}
.book-name {
  width: 61px;
  flex: none;
}
.yen {
  font-style: normal;
  margin-left: 2px;
  font-size: 20px;
}
.book-price {
  width: 97px;
  flex: none;
  text-align: right;
  font-weight: 700;
  font-size: 20px;
  color: #d8d8d8;
}
.book-vol {
  width: 103px;
  flex: none;
  text-align: right;
  font-weight: 700;
  font-size: 20px;
  color: #c8c800;
}
.book-vol i,
.stat-cell b i {
  font-style: normal;
  font-size: 22px;
  font-weight: 300;
}
.book-sell {
  height: 134px;
  flex: none;
}
.book-sell .book-row {
  position: relative;
  top: -1px;
}
.book-buy {
  height: 139px;
  flex: none;
  box-sizing: border-box;
  border-bottom: 2px solid #a00000;
}
.book-split {
  height: 2px;
  flex: none;
  display: flex;
}
.book-split i:first-child {
  width: 159px;
  background: #b08030;
}
.book-split i:last-child {
  flex: 1;
  background: #2f7ab0;
}
.stats {
  flex: none;
  box-sizing: border-box;
  height: 147px;
  border-bottom: 2px solid #a00000;
}
.stats-b {
  height: 93px;
}
.stat-row {
  height: 29px;
  display: flex;
  padding-left: 2px;
}
.stats-b .stat-row {
  height: 28.5px;
}
.stat-cell {
  display: flex;
  justify-content: space-between;
  align-items: center;
  width: 161px;
  margin-right: 8px;
  white-space: nowrap;
}
.stat-cell + .stat-cell {
  width: 159px;
  margin-right: 0;
}
.stat-cell .tight {
  letter-spacing: -1.4px;
}
.stat-cell b {
  font-size: 20px;
  font-weight: 700;
  color: #c4c4c4;
}
.stat-cell b.red {
  color: #f02020;
}
.stat-cell b.green {
  color: #00d800;
}

/* 竖排工具 */
.side {
  width: 36px;
  flex: none;
  background: #f0f0f0;
  display: flex;
  flex-direction: column;
  margin-top: -2px;
}
.side-item {
  height: 34.52px;
  flex: none;
  display: flex;
  align-items: center;
  justify-content: center;
}
.side-item svg {
  width: 28px;
  height: 25px;
}
.side-sep {
  height: 1px;
  margin: 6px 2px 6px 2px;
  flex: none;
  background: #a8a8a8;
}
.arrow-ico {
  fill: #fff;
  stroke: #5b9bee;
  stroke-width: 1.8;
}
.frame {
  fill: #fff;
  stroke: #5b9bee;
  stroke-width: 1.6;
}
.frame-green {
  fill: #cfe8cf;
}
.ico-text {
  font-size: 14px;
  fill: #1f5fc0;
  text-anchor: middle;
}
.ico-fx {
  font-size: 12px;
  font-style: italic;
  fill: #1f4fa0;
  text-anchor: middle;
}
.ico-rsi {
  font-size: 15px;
  font-weight: 700;
  color: #3a4ab0;
}
.side-label {
  font-size: 17px;
  color: #20408a;
}
.side-label.active {
  background: #f8f8f8;
  box-shadow: inset 1px 1px 0 #a0a0a0;
  font-size: 18px;
}

/* 状态栏 */
.statusbar {
  flex: none;
  height: 37px;
  background: #f6f6f6;
  display: flex;
  align-items: center;
  color: #333;
  font-size: 21px;
}
.status-ico {
  width: 25px;
  flex: none;
}
.status-ico i {
  display: block;
  width: 20px;
  height: 18px;
  margin-left: 2px;
  box-sizing: border-box;
  border: 2px solid #f0a020;
  border-radius: 3px;
  background: #f8d070;
  box-shadow: inset 0 0 0 3px #f4b840;
}
.index {
  width: 412px;
  flex: none;
  display: flex;
  align-items: center;
  color: #108a10;
  font-weight: 700;
}
.idx-name {
  width: 54px;
  flex: none;
  font-size: 23px;
  font-weight: 400;
  color: #333;
}
.idx-val {
  width: 100px;
  flex: none;
}
.idx-chg {
  width: 76px;
  flex: none;
}
.idx-pct {
  width: 105px;
  flex: none;
}
.idx-vol {
  color: #222;
}
.index.flat,
.index.flat .idx-val,
.index.flat .idx-chg {
  color: #333;
}
.index.flat .idx-val {
  width: 108px;
}

/* 水印横幅，压在软件界面之上 */
.banner {
  position: absolute;
  left: 1080px;
  top: 1286px;
  width: 1080px;
  height: 109px;
  background: #80abd9;
  display: flex;
  align-items: center;
}
.banner-cn {
  margin-left: 22px;
  width: 374px;
  flex: none;
  font-size: 75px;
  line-height: 109px;
  font-weight: 900;
  color: #10008a;
  white-space: nowrap;
}
.banner-logo {
  margin-left: 36px;
  flex: none;
}
.logo-url {
  fill: #fff;
  font-size: 9px;
}
.banner-url {
  margin-left: 40px;
  font-family: 'DejaVu Serif', serif;
  font-weight: 700;
  font-size: 70px;
  color: #fff;
  white-space: nowrap;
  transform: scaleY(1.18);
}
</style>

<style>
body {
  margin: 0;
  background: #000;
  overflow: hidden;
}
</style>
